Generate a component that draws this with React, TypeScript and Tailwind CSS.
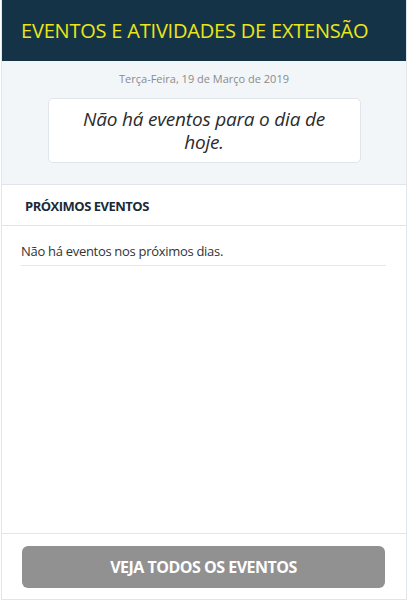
import React from "react";

export default function App() {
  return (
    <div
      className="w-[408px] h-[602px] bg-white px-[1px]"
      style={{ fontFamily: '"Open Sans", "Noto Sans", sans-serif' }}
    >
      <div className="h-[600px] flex flex-col border-x border-b border-[#e1e6ec]">
        <div className="h-[61px] shrink-0 bg-[#153346] flex items-center pl-[19px]">
          <h1 className="text-[20px] leading-none text-[#ece619] tracking-[-0.2px]">
            EVENTOS E ATIVIDADES DE EXTENSÃO
          </h1>
        </div>
        <div className="h-[123px] shrink-0 bg-[#f3f6f9] flex flex-col items-center pt-[11px]">
          <p className="text-[11px] leading-[14px] text-[#8a8a8a]">
            Terça-Feira, 19 de Março de 2019
          </p>
          <div className="mt-[12px] w-[313px] h-[65px] bg-white border border-[#dfe5eb] rounded-[5px] flex items-center justify-center px-[20px]">
            <p className="text-[19px] leading-[23px] italic text-[#2b2b2b] text-center tracking-[-0.2px]">
              Não há eventos para o dia de hoje.
            </p>
          </div>
        </div>
        <div className="h-[42px] shrink-0 border-y border-[#dfe5eb] flex items-center pl-[23px]">
          <h2 className="text-[13px] font-bold text-[#1a2a3a] tracking-[-0.5px] leading-[18px] mt-[1px]">
            PRÓXIMOS EVENTOS
          </h2>
        </div>
        <div className="flex-1 pl-[19px] pr-[20px] pt-[16px]">
          <p className="text-[13px] leading-[18px] text-[#333333] tracking-[-0.3px] pb-[5px] border-b border-[#e3e8ed]">
            Não há eventos nos próximos dias.
          </p>
        </div>
        <div className="shrink-0 border-t border-[#e1e6ec] pl-[20px] pt-[12px] pb-[11px]">
          <button className="w-[363px] h-[42px] bg-[#919191] rounded-[6px] flex items-center justify-center text-white text-[16px] font-bold tracking-[-0.5px]">
            VEJA TODOS OS EVENTOS
          </button>
        </div>
      </div>
    </div>
  );
}
